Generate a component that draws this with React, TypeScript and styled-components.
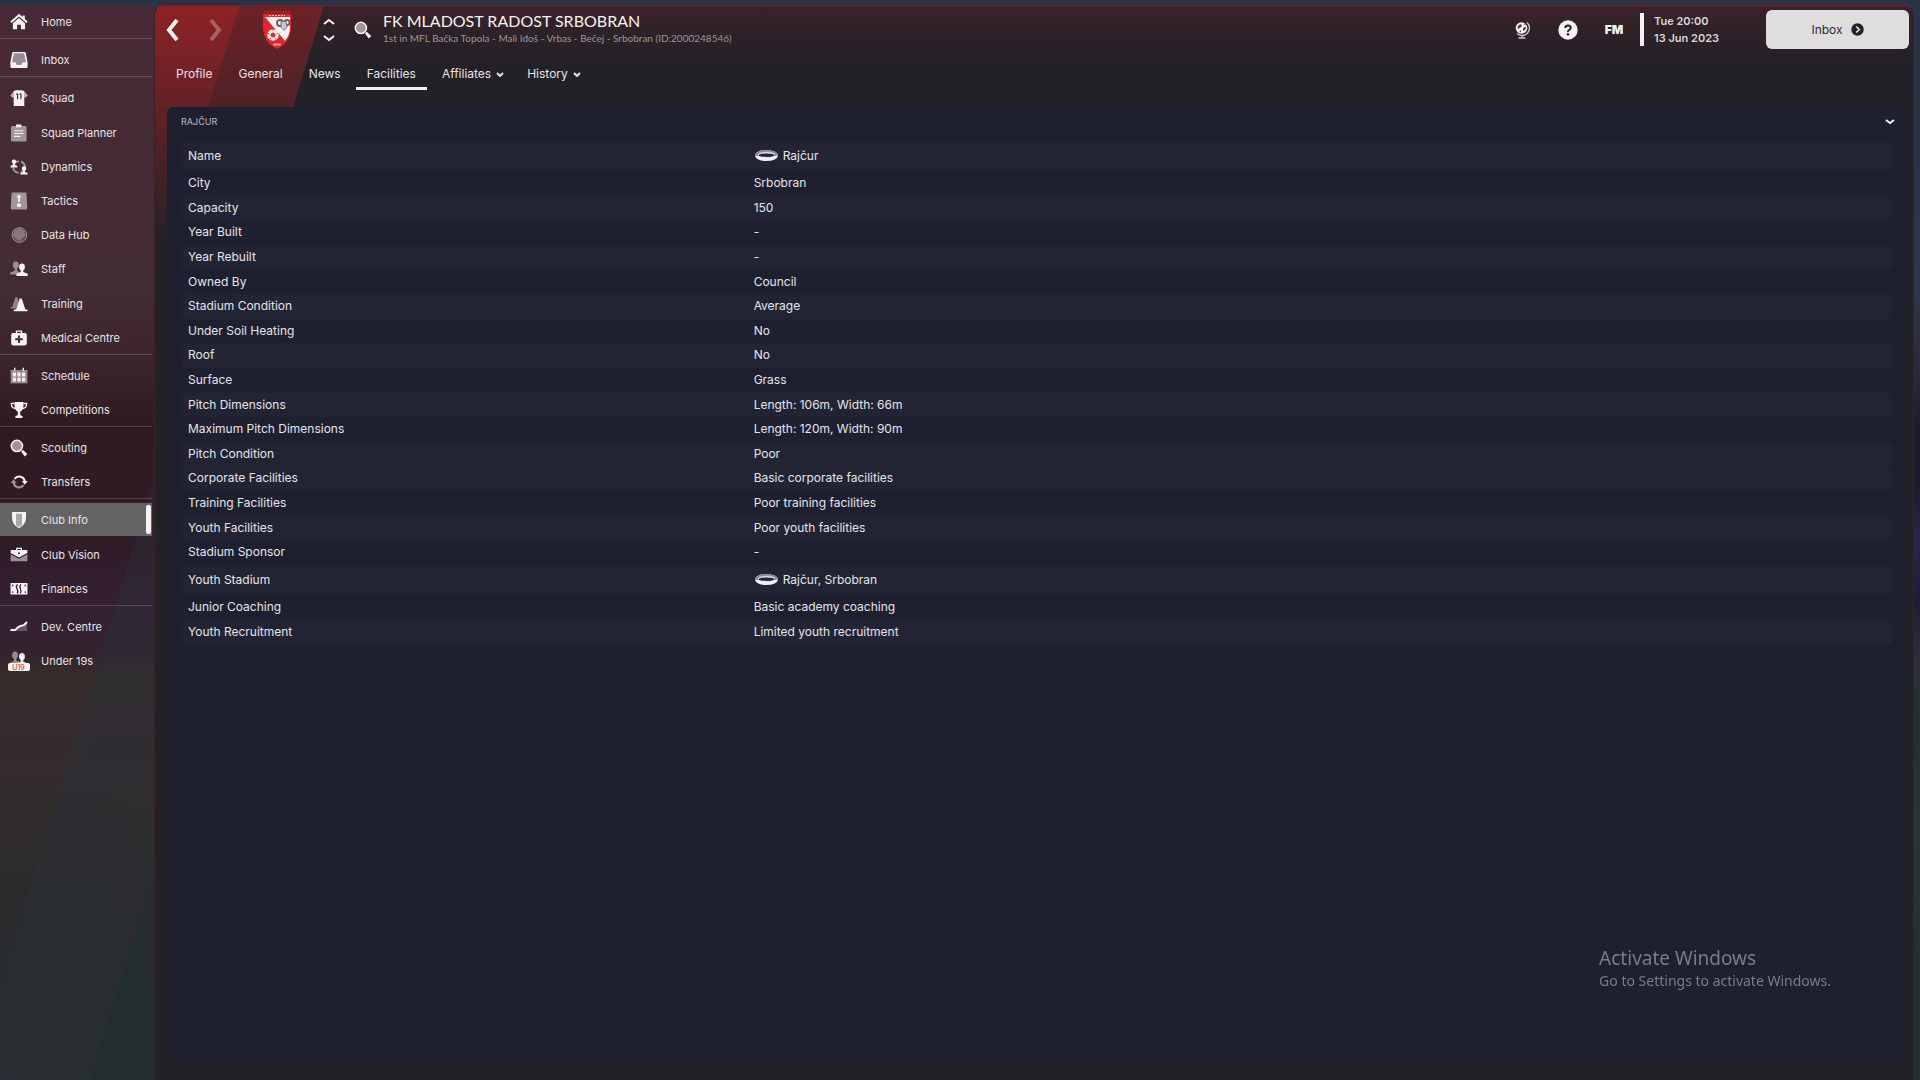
import React from 'react';
import styled, { createGlobalStyle } from 'styled-components';

const DIM = 'rgba(255, 255, 255, 0.5)';
const WHITE = '#f4f2f3';

const GlobalStyle = createGlobalStyle`
  *, *::before, *::after { box-sizing: border-box; }
  body {
    margin: 0;
    color: #e6e4e8;
    font-family: Inter, "Liberation Sans", sans-serif;
    font-size: 12px;
    background: linear-gradient(180deg, #2a3245 0, #2b3247 15%, #30344a 27%, #2a2b3c 34%, #1b1b2c 40%, #1c1b2f 45%, #2a2544 50%, #1f1c36 56%, #2c2f38 61%, #24302f 68%, #2c3336 76%, #243030 90%, #262f30 100%) fixed;
  }
  button, a { font: inherit; color: inherit; }
`;

const Page = styled.div`
  display: flex;
  min-height: 100vh;
  padding: 5px 6px 0 0;
`;

/* ---------- sidebar ---------- */

const Sidebar = styled.nav`
  flex: 0 0 154px;
  padding: 0 2px 0 0;
  background:
    linear-gradient(107deg, transparent 286px, rgba(40, 48, 58, 0.4) 287px, rgba(42, 48, 52, 0.4) 400px, rgba(31, 46, 49, 0.6) 401px),
    linear-gradient(180deg, #472a35 0, #432b34 280px, #3e252d 345px, #301a22 420px, #301c27 540px, #352034 600px, #33222f 645px, #362c2a 670px, #362b2f 720px, #322c2c 800px, #2b2b2c 880px, #262b2d 1075px);
`;

const Group = styled.ul`
  list-style: none;
  margin: 0 0 4px;
  padding: 0;
  border-bottom: 1px solid rgba(255, 255, 255, 0.16);

  &:last-child { border-bottom: 0; }
`;

const Entry = styled.li`
  height: 34px;

  &:last-child { height: 33px; }
  &:nth-child(5n + 2):not(:last-child) { margin-top: 1px; }
`;

const SideLink = styled.a<{ $active?: boolean }>`
  display: grid;
  grid-template-columns: 22px 1fr 5px;
  align-items: center;
  gap: 11px;
  height: 33px;
  padding: 0 1px 0 8px;
  font-size: 11px;
  text-decoration: none;
  background: ${p => (p.$active ? '#646364' : 'transparent')};

  &::after {
    content: '';
    height: 29px;
    border-radius: 2px;
    background: ${p => (p.$active ? WHITE : 'transparent')};
  }
`;

const Label = styled.span`
  white-space: nowrap;
`;

const IconBox = styled.svg`
  display: block;
  justify-self: center;
  fill: ${WHITE};
`;

/* ---------- main window ---------- */

const Window = styled.div`
  flex: 1;
  min-width: 0;
  display: flex;
  flex-direction: column;
  border: 1px solid #3a2226;
  border-top-color: #7c1f25;
  border-bottom: 0;
  border-radius: 9px 9px 0 0;
  background:
    linear-gradient(180deg, rgba(34, 33, 38, 0) 0, rgba(34, 33, 38, 0.4) 100px, #222126 240px),
    linear-gradient(107deg, #8e2226 0, #8e2226 80px, #6c2226 81px, #6c2226 161px, transparent 162px),
    linear-gradient(180deg, #3c2228 0, #222127 56px, #222126 100%);
`;

const TopBar = styled.header`
  display: flex;
  align-items: center;
  height: 47px;
  padding: 0 4px 0 7px;
`;

const Plain = styled.button<{ $faded?: boolean }>`
  display: flex;
  align-items: center;
  justify-content: center;
  padding: 0;
  border: 0;
  background: none;
  color: ${WHITE};
  cursor: pointer;
  opacity: ${p => (p.$faded ? 0.3 : 1)};
`;

const HistoryNav = styled.div`
  display: flex;
  gap: 20px;

  button { width: 22px; height: 30px; }
`;

const Crest = styled.svg`
  display: block;
  margin: 0 30px 0 35px;
`;

const Stepper = styled.div`
  display: flex;
  flex-direction: column;
  gap: 6px;
  margin-right: 19px;

  button { width: 12px; height: 10px; }
`;

const Heading = styled.div`
  margin-left: 11px;
  font-family: Lato, "Liberation Sans", sans-serif;
`;

const Title = styled.h1`
  margin: 0;
  font-size: 16px;
  line-height: 18px;
  font-weight: 400;
  color: #f4f2f3;
`;

const Subtitle = styled.p`
  margin: 0;
  font-size: 10px;
  line-height: 17px;
  color: #99959a;
`;

const Tools = styled.div`
  display: flex;
  align-items: center;
  gap: 26px;
  margin-left: auto;

  button { width: 20px; height: 30px; }
`;

const Logo = styled.span`
  font-size: 12px;
  font-weight: 900;
`;

const Clock = styled.div`
  display: flex;
  flex-direction: column;
  justify-content: center;
  width: 126px;
  height: 33px;
  margin-left: 16px;
  padding-left: 10px;
  border-left: 4px solid ${WHITE};
  font-size: 11px;
  line-height: 17px;
  font-weight: 600;
  color: #d9d6da;
`;

const Continue = styled.button`
  display: flex;
  align-items: center;
  justify-content: center;
  gap: 8px;
  width: 143px;
  height: 39px;
  border: 0;
  border-radius: 6px;
  background: #dfddde;
  color: #2b2a36;
  font-size: 12px;
  cursor: pointer;
`;

const Tabs = styled.nav`
  display: flex;
  gap: 4px;
  height: 34px;
  margin: 3px 0 17px 10px;
`;

const Tab = styled.a<{ $active?: boolean; $more?: boolean }>`
  display: flex;
  align-items: center;
  gap: 5px;
  padding: 4px ${p => (p.$more ? 8 : 11)}px 0 11px;
  border-bottom: 3px solid ${p => (p.$active ? WHITE : 'transparent')};
  text-decoration: none;
  white-space: nowrap;
`;

const Panel = styled.section`
  flex: 1;
  margin: 0 8px 16px 12px;
  padding: 0 13px 0 14px;
  border-radius: 6px;
  background: #1e2030;
`;

const PanelHead = styled.div`
  display: flex;
  align-items: center;
  justify-content: space-between;
  height: 29px;
  margin-bottom: 5px;

  button { width: 12px; height: 20px; margin-right: -4px; }
`;

const PanelTitle = styled.h2`
  margin: 0;
  font-size: 9px;
  font-weight: 400;
  color: #b9b9c3;
`;

const Facts = styled.table`
  width: 100%;
  border-spacing: 0;
  text-align: left;
`;

const Row = styled.tr<{ $striped: boolean; $tall: boolean }>`
  height: 25px;

  &:nth-child(5n + 3), &:nth-child(5n + 6) { height: 24px; }
  && { ${p => (p.$tall ? 'height: 30px;' : '')} }
  > * { background: ${p => (p.$striped ? '#222434' : 'transparent')}; }
`;

const Key = styled.th`
  width: 33%;
  padding: 0 7px 2px;
  border-radius: 5px 0 0 5px;
  font-weight: 400;
`;

const Value = styled.td`
  padding: 0 8px 2px;
  border-radius: 0 5px 5px 0;
`;

const Venue = styled.span`
  display: flex;
  align-items: center;
  gap: 4px;
`;

const Watermark = styled.div`
  position: fixed;
  right: 89px;
  bottom: 88px;
  font-family: "Noto Sans", "Open Sans", sans-serif;
  font-size: 14px;
  line-height: 22px;
  color: #7b7c83;
  pointer-events: none;
`;

const WatermarkTitle = styled.div`
  font-size: 19px;
  line-height: 24px;
`;

/* ---------- drawings ---------- */

const glyphs: Record<string, React.ReactNode> = {
  Home: (
    <>
      <path d="M9 0.8 0.3 8.6 1.6 10 9 3.4 16.4 10 17.7 8.6 14.8 6V2.4h-2.2V4z" />
      <path d="M9 4.9 2.9 10.3V16.3h4.2v-4.6h3.8v4.6h4.2v-6z" />
    </>
  ),
  Inbox: (
    <>
      <path d="M3.4 1h11.2q1 0 1.2 1L17.6 11v4.8q0 1.2-1.2 1.2H1.6Q0.4 17 0.4 15.8V11L2.2 2Q2.4 1 3.4 1z" />
      <path fill="#9a8c94" d="M4 2.3h10l2 9h-3.5l-1.2 2.6H6.7L5.5 11.3H2z" />
    </>
  ),
  Squad: (
    <>
      <path d="M6 1.2h6l2 .8 3.6 4.6-2.3 2.2-1-1V17H3.7V7.8l-1 1L.4 6.6 4 2z" />
      <path fill="#8b7b83" d="M4 2 .4 6.6l2.3 2.2 1-1zM14 2l3.6 4.6-2.3 2.2-1-1z" opacity=".6" />
      <path fill="#47303a" d="M6.2 4.6h2v5.600H7V6h-.8zM9.600 4.6h2v5.600h-1.200V6h-.8z" />
    </>
  ),
  'Squad Planner': (
    <>
      <rect x="1" y="2" width="15.5" height="15.6" rx="1.4" fill={DIM} />
      <path d="M6 .4h5.4v2.8H6zM4 6.2h9.4v1.1H4zM4 9h9.4v1.1H4zM4 11.8h6.4v1.1H4z" />
    </>
  ),
  Dynamics: (
    <>
      <circle cx="9" cy="9" r="5.8" fill="none" stroke={DIM} strokeWidth="2" strokeDasharray="7 2.2 8 2.2" />
      <circle cx="4" cy="3.6" r="2.2" />
      <path d="M3 5h2v2l2.3.8V9.4H.6V7.8L3 7zM13 12h2v2l2.6.9v1.7H10.4v-1.7L13 14z" />
      <circle cx="14" cy="10.6" r="2.3" />
    </>
  ),
  Tactics: (
    <>
      <path fill={DIM} d="M1.6.6h14.8l.9 15.5q0 1.4-1.4 1.4H2.1Q.7 17.5.7 16.1z" />
      <path d="m9 2.4 3 3.2H9.9V10H8.1V5.6H6z" />
      <circle cx="9" cy="13.3" r="2" />
    </>
  ),
  'Data Hub': (
    <>
      <circle cx="9.4" cy="9" r="7.3" fill="rgba(255,255,255,.15)" stroke="#a2969c" strokeWidth="1" />
      <path d="m9.400 3 4 1.800L15 9l-4.800 5.500-3.800-1.600L3.500 9l1.900-4.400z" fill="rgba(255,255,255,.25)" stroke="#8c7e85" strokeWidth=".8" />
    </>
  ),
  Staff: (
    <>
      <g opacity=".5">
        <ellipse cx="5.8" cy="5" rx="2.9" ry="3.4" />
        <path d="M4.6 7.5h2.6v3L9 12v2.600H.3v-2L4.6 10.8z" />
      </g>
      <ellipse cx="12" cy="7" rx="2.9" ry="3.4" />
      <path d="M10.7 9.8h2.6v2.1l4.4 1.8v2.2H6.5v-2.200l4.200-1.800z" />
    </>
  ),
  Training: (
    <>
      <path opacity=".45" d="M5.5 2h1.800l1.400 5L6 13.500H.5v-1.200H2z" />
      <path d="M9.7 3.600h2l3.700 10.800h2.200v1.800H3.800v-1.800H6z" />
    </>
  ),
  'Medical Centre': (
    <>
      <path d="M5.8 4V1.500h6.400V4h-1.300V2.800H7.100V4z" />
      <rect x="1.2" y="4" width="15.6" height="12.4" rx="1.8" />
      <path fill="#43303a" d="M8 6.400h2v2.800h2.800v2H10V14H8v-2.800H5.200v-2H8z" />
    </>
  ),
  Schedule: (
    <>
      <path opacity=".5" d="M.6 3h16.800v13.400H.6z" />
      <path d="M4 .8h1.400v3H4zM12.600.8H14v3h-1.400zM2.800 5.600h3.200v3.800H2.800zM7.400 5.600h3.200v3.800H7.400zM12 5.600h3.200v3.800H12zM2.800 10.800h3.200v3.600H2.800zM7.400 10.800h3.200v3.600H7.400zM12 10.800h3.200v3.600H12z" />
    </>
  ),
  Competitions: (
    <>
      <path d="M4.500 1h9v3.500q0 4.500-3.300 6.300v3.300l2.400 1.100V17H5.400v-1.800l2.400-1.100v-3.300Q4.500 9 4.500 4.500z" />
      <path fill="none" stroke={WHITE} strokeWidth="1.3" d="M4.500 2.500H1.300q0 4.500 4 5M13.500 2.500h3.200q0 4.500-4 5" />
    </>
  ),
  Scouting: (
    <>
      <path d="m11 12.600 1.800-1.800 4.500 4.200-2.500 2.500z" />
      <circle cx="6.9" cy="6.9" r="5.6" fill="#a0969a" stroke={WHITE} strokeWidth="1.5" />
    </>
  ),
  Transfers: (
    <>
      <path fill="none" stroke={WHITE} strokeWidth="2.2" d="M4.600 6A5.600 5.600 0 0 1 14.800 8.500" />
      <path d="M11.800 8h6l-3 3.800z" />
      <path fill="none" stroke="#9a8f94" strokeWidth="2.2" d="M13.600 12.200A5.600 5.600 0 0 1 3.600 9.500" />
      <path fill="#9a8f94" d="M.6 10h6l-3-3.800z" />
    </>
  ),
  'Club Info': (
    <>
      <path d="M2 1h14v5.500q0 7-7 10.800Q2 13.500 2 6.500z" />
      <path fill="#a9a7a9" d="M6 2.800h6v11.400L9 16l-3-1.800z" />
    </>
  ),
  'Club Vision': (
    <>
      <path d="M6 4V1.800h6V4h-1.300V3H7.300v1zM.6 4.600Q.6 4 1.400 4h15.200q.8 0 .8.600V7L9 11.600.6 7z" />
      <path fill="#9c9097" d="M.6 8.200 9 12.800l8.400-4.600v6.200q0 .8-.8.800H1.400q-.8 0-.8-.8z" />
      <circle cx="9" cy="7.2" r="1" fill="#3a2530" />
    </>
  ),
  Finances: (
    <>
      <rect x=".5" y="3" width="17" height="11.6" rx=".6" />
      <path fill="#3a2434" d="M2 4.800h1.400v1.400H2zM14.600 4.800H16v1.400h-1.400zM2 11.400h1.400v1.400H2zM14.600 11.400H16v1.400h-1.400z" />
      <path fill="none" stroke="#3a2434" strokeWidth="1.3" d="M7.600 4.500Q5.400 6 7 8.800t.2 4.700M11 4.500q-2 1.500-.6 4.300t0 4.700" />
    </>
  ),
  'Dev. Centre': (
    <>
      <path opacity=".25" d="M2 12.500h4l3-3 4-1 4-4v8.500H2z" />
      <path fill="none" stroke={WHITE} strokeWidth="2" d="M.5 12h4.700Q7.500 9 10 8.200t3.800-1L17 4" />
    </>
  ),
};

const Glyph = ({ name }: { name: string }) =>
  name === 'Under 19s' ? (
    <IconBox width="22" height="20" viewBox="0 0 22 20" aria-hidden="true">
      <g opacity=".5">
        <ellipse cx="7" cy="4.2" rx="2.9" ry="3.6" />
        <path d="M5.800 7h2.600v3H11v3H2v-1.500L5.800 10z" />
      </g>
      <ellipse cx="14" cy="5.6" rx="2.9" ry="3.6" />
      <path d="M12.700 8.500h2.600v2.200l4 1.500H9l3.700-1.500z" />
      <rect y="12" width="22" height="8" rx="2" />
      <text x="10.5" y="19" textAnchor="middle" fontSize="7" fontWeight="500" fill="#e5482f">U19</text>
    </IconBox>
  ) : (
    <IconBox width="18" height="18" viewBox="0 0 18 18" aria-hidden="true">{glyphs[name]}</IconBox>
  );

const Chevron = ({ d, w, h, stroke }: { d: string; w: number; h: number; stroke: number }) => (
  <svg width={w} height={h} viewBox={`0 0 ${w} ${h}`} fill="none" stroke="currentColor" strokeWidth={stroke} aria-hidden="true">
    <path d={d} />
  </svg>
);

const ClubCrest = () => (
  <Crest width="32" height="41" viewBox="0 0 32 41" role="img" aria-label="Club crest">
    <path d="M2 1.500h28V5H2z" fill="#8c1a1e" />
    <path d="M3 3h26" stroke="#b5383c" strokeWidth="1" strokeDasharray="2 1" />
    <path d="M2 5h28v13q0 15-14 22Q2 33 2 18z" fill="#e3242a" />
    <path d="M4 8h25v10q0 8-5 14z" fill="#f3f1f2" />
    <path d="M8 6.500h16" stroke="#f0b9b9" strokeWidth="1.2" strokeDasharray="2 1" />
    <circle cx="19" cy="14" r="3" fill="none" stroke="#6a6165" strokeWidth="2" />
    <circle cx="26" cy="13.500" r="2.600" fill="none" stroke="#6a6165" strokeWidth="2" />
    <path d="M20 12.500h5l1 6-3 3-3-3z" fill="#c9c5c8" stroke="#6a6266" strokeWidth=".8" />
    <circle cx="12" cy="26" r="5.800" fill="#f8f4f4" />
    <path d="m12 23.800 2.200 1.600-.8 2.500h-2.800l-.8-2.500zM12 20.200v1.600M6.600 24.400l1.700.6M17.400 24.400l-1.700.6M8.800 30.600l1-1.500M15.200 30.600l-1-1.500" fill="#e3242a" stroke="#e3242a" strokeWidth="1" />
    <path d="M12.500 35.500h7" stroke="#f7d6d6" strokeWidth="1.800" strokeDasharray="1.400 .5" />
  </Crest>
);

const StadiumIcon = () => (
  <svg width="25" height="13" viewBox="0 0 25 13" aria-hidden="true">
    <ellipse cx="12.500" cy="6.500" rx="11.500" ry="5.600" fill="#f1f0f4" />
    <path d="M1 6.500a11.500 5.600 0 0 1 23 0l-2 .4H3z" fill="#8987a3" />
    <ellipse cx="12.500" cy="5.600" rx="8.600" ry="2.800" fill="#d5d4df" />
    <ellipse cx="12.500" cy="6.200" rx="7.800" ry="1.700" fill="#25263a" />
  </svg>
);

/* ---------- data ---------- */

const menu = [
  ['Home'],
  ['Inbox'],
  ['Squad', 'Squad Planner', 'Dynamics', 'Tactics', 'Data Hub', 'Staff', 'Training', 'Medical Centre'],
  ['Schedule', 'Competitions'],
  ['Scouting', 'Transfers'],
  ['Club Info', 'Club Vision', 'Finances'],
  ['Dev. Centre', 'Under 19s'],
];

const tabs = [
  { name: 'Profile' },
  { name: 'General' },
  { name: 'News' },
  { name: 'Facilities', active: true },
  { name: 'Affiliates', more: true },
  { name: 'History', more: true },
];

const facts: { key: string; value: string; striped?: boolean; venue?: boolean }[] = [
  { key: 'Name', value: 'Rajčur', striped: true, venue: true },
  { key: 'City', value: 'Srbobran' },
  { key: 'Capacity', value: '150', striped: true },
  { key: 'Year Built', value: '-' },
  { key: 'Year Rebuilt', value: '-', striped: true },
  { key: 'Owned By', value: 'Council' },
  { key: 'Stadium Condition', value: 'Average', striped: true },
  { key: 'Under Soil Heating', value: 'No' },
  { key: 'Roof', value: 'No', striped: true },
  { key: 'Surface', value: 'Grass' },
  { key: 'Pitch Dimensions', value: 'Length: 106m, Width: 66m', striped: true },
  { key: 'Maximum Pitch Dimensions', value: 'Length: 120m, Width: 90m' },
  { key: 'Pitch Condition', value: 'Poor', striped: true },
  { key: 'Corporate Facilities', value: 'Basic corporate facilities', striped: true },
  { key: 'Training Facilities', value: 'Poor training facilities' },
  { key: 'Youth Facilities', value: 'Poor youth facilities', striped: true },
  { key: 'Stadium Sponsor', value: '-' },
  { key: 'Youth Stadium', value: 'Rajčur, Srbobran', striped: true, venue: true },
  { key: 'Junior Coaching', value: 'Basic academy coaching' },
  { key: 'Youth Recruitment', value: 'Limited youth recruitment', striped: true },
];

export default function App() {
  return (
    <>
      <GlobalStyle />
      <Page>
        <Sidebar aria-label="Main">
          {menu.map(group => (
            <Group key={group[0]}>
              {group.map(name => (
                <Entry key={name}>
                  <SideLink href="#" $active={name === 'Club Info'}>
                    <Glyph name={name} />
                    <Label>{name}</Label>
                  </SideLink>
                </Entry>
              ))}
            </Group>
          ))}
        </Sidebar>

        <Window>
          <TopBar>
            <HistoryNav>
              <Plain aria-label="Back"><Chevron d="M11 1 3 11l8 10" w={14} h={22} stroke={4} /></Plain>
              <Plain aria-label="Forward" $faded><Chevron d="m3 1 8 10-8 10" w={14} h={22} stroke={4} /></Plain>
            </HistoryNav>
            <ClubCrest />
            <Stepper>
              <Plain aria-label="Previous club"><Chevron d="m1 6 5-4 5 4" w={12} h={8} stroke={2} /></Plain>
              <Plain aria-label="Next club"><Chevron d="m1 2 5 4 5-4" w={12} h={8} stroke={2} /></Plain>
            </Stepper>
            <Plain aria-label="Search"><Glyph name="Scouting" /></Plain>
            <Heading>
              <Title>FK MLADOST RADOST SRBOBRAN</Title>
              <Subtitle>1st in MFL Bačka Topola - Mali Iđoš - Vrbas - Bečej - Srbobran (ID:2000248546)</Subtitle>
            </Heading>
            <Tools>
              <Plain aria-label="World">
                <svg width="18" height="18" viewBox="0 0 18 18" aria-hidden="true">
                  <circle cx="8.500" cy="7" r="5.800" fill={WHITE} />
                  <path d="M5 4.500 8 3l1 2-2 2-2.500 1zM10 7l3-1.500-.5 3L10 10zM11 2.500l2 1-1.500 1zM6 10l2-.500v2z" fill="#55474c" />
                  <path d="M14 1.500A7.400 7.400 0 0 1 4 12.600M9 14.500V17M5.500 17h7" fill="none" stroke="#cfcacd" strokeWidth="1.3" />
                </svg>
              </Plain>
              <Plain aria-label="Help">
                <svg width="20" height="20" viewBox="0 0 20 20" aria-hidden="true">
                  <circle cx="10" cy="10" r="9.700" fill={WHITE} />
                  <path d="M7.300 8Q7.300 5.500 10 5.500t2.700 2.200Q12.700 9 11.200 9.800T10 12" fill="none" stroke="#2c2328" strokeWidth="2" />
                  <circle cx="10" cy="14.300" r="1.300" fill="#2c2328" />
                </svg>
              </Plain>
              <Plain><Logo>FM</Logo></Plain>
            </Tools>
            <Clock>
              <span>Tue 20:00</span>
              <span>13 Jun 2023</span>
            </Clock>
            <Continue>
              Inbox
              <svg width="13" height="13" viewBox="0 0 13 13" aria-hidden="true">
                <circle cx="6.500" cy="6.500" r="6.200" fill="#24232d" />
                <path d="m5.200 3.500 3 3-3 3" fill="none" stroke="#dfddde" strokeWidth="1.700" />
              </svg>
            </Continue>
          </TopBar>

          <Tabs aria-label="Club">
            {tabs.map(tab => (
              <Tab key={tab.name} href="#" $active={tab.active} $more={tab.more}>
                {tab.name}
                {tab.more && <Chevron d="m1 2 3 3 3-3" w={8} h={6} stroke={2} />}
              </Tab>
            ))}
          </Tabs>

          <Panel>
            <PanelHead>
              <PanelTitle>RAJČUR</PanelTitle>
              <Plain aria-label="Collapse"><Chevron d="m1 2 4 3 4-3" w={10} h={7} stroke={2} /></Plain>
            </PanelHead>
            <Facts>
              <tbody>
                {facts.map(f => (
                  <Row key={f.key} $striped={!!f.striped} $tall={!!f.venue}>
                    <Key scope="row">{f.key}</Key>
                    <Value>{f.venue ? <Venue><StadiumIcon />{f.value}</Venue> : f.value}</Value>
                  </Row>
                ))}
              </tbody>
            </Facts>
          </Panel>
        </Window>
      </Page>
      <Watermark>
        <WatermarkTitle>Activate Windows</WatermarkTitle>
        Go to Settings to activate Windows.
      </Watermark>
    </>
  );
}
